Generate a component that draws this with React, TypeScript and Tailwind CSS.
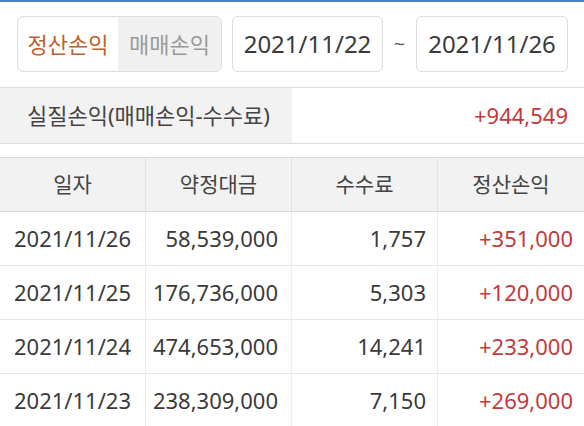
import React from 'react'

const rows = [
  { date: '2021/11/26', amount: '58,539,000', fee: '1,757', profit: '+351,000' },
  { date: '2021/11/25', amount: '176,736,000', fee: '5,303', profit: '+120,000' },
  { date: '2021/11/24', amount: '474,653,000', fee: '14,241', profit: '+233,000' },
  { date: '2021/11/23', amount: '238,309,000', fee: '7,150', profit: '+269,000' },
]

const font = { fontFamily: '"Noto Sans", "Noto Sans CJK KR", sans-serif' }

export default function App() {
  return (
    <div style={font} className="w-[584px] h-[426px] overflow-hidden bg-white border-t-2 border-[#4a80c8] text-[#3a3a3a]">
      {/* filter */}
      <div className="flex items-center pt-[14px] pl-[17px]">
        <div className="flex h-[56px] w-[205px] rounded-md border border-[#dddddd] overflow-hidden">
          <div className="flex w-[102px] items-center justify-center rounded-l-md border border-[#e8b99a] bg-white text-[22px] text-[#c0602c] -m-px">
            정산손익
          </div>
          <div className="flex flex-1 items-center justify-center bg-[#f0f0f0] text-[22px] text-[#9a9a9a]">
            매매손익
          </div>
        </div>
        <div className="ml-[10px] flex h-[56px] w-[151px] items-center justify-center rounded-md border border-[#dddddd] text-[24px]">
          2021/11/22
        </div>
        <div className="flex w-[33px] justify-center text-[20px] text-[#666]">~</div>
        <div className="flex h-[56px] w-[152px] items-center justify-center rounded-md border border-[#dddddd] text-[24px]">
          2021/11/26
        </div>
      </div>

      {/* summary */}
      <div className="mt-[15px] grid h-[57px] grid-cols-[292px_1fr] border-y border-[#dcdcdc]">
        <div className="flex items-center bg-[#f2f2f2] pl-[27px] text-[22px] text-[#444]">실질손익(매매손익-수수료)</div>
        <div className="flex items-center justify-end pr-[16px] text-[22px] text-[#c23a3a]">+944,549</div>
      </div>

      {/* table */}
      <div className="mt-[13px] border-t border-[#dcdcdc]">
        <div className="grid h-[54px] grid-cols-[146px_146px_146px_1fr] border-b border-[#dcdcdc] bg-[#f2f2f2] text-[21px] text-[#444]">
          <div className="flex items-center justify-center border-r border-[#e2e2e2]">일자</div>
          <div className="flex items-center justify-center border-r border-[#e2e2e2]">약정대금</div>
          <div className="flex items-center justify-center border-r border-[#e2e2e2]">수수료</div>
          <div className="flex items-center justify-center">정산손익</div>
        </div>
        {rows.map((r) => (
          <div key={r.date} className="grid h-[54px] grid-cols-[146px_146px_146px_1fr] border-b border-[#e6e6e6] text-[22px]">
            <div className="flex items-center justify-center border-r border-[#ececec]">{r.date}</div>
            <div className="flex items-center justify-end pr-[13px] border-r border-[#ececec]">{r.amount}</div>
            <div className="flex items-center justify-end pr-[11px] border-r border-[#ececec]">{r.fee}</div>
            <div className="flex items-center justify-end pr-[11px] text-[#c23a3a]">{r.profit}</div>
          </div>
        ))}
      </div>
    </div>
  )
}
